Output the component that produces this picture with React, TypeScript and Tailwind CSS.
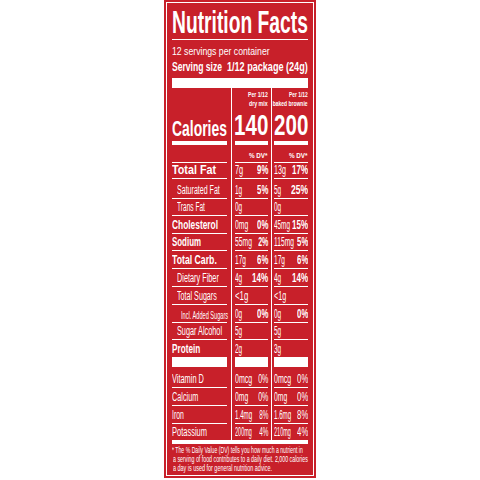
import { useLayoutEffect, useRef, useState, type ReactNode } from "react";

function Fit({
  w,
  right,
  className = "",
  children,
}: {
  w: string;
  right?: boolean;
  className?: string;
  children: ReactNode;
}) {
  const ref = useRef<HTMLSpanElement>(null);
  const [s, setS] = useState<number | null>(null);
  useLayoutEffect(() => {
    const el = ref.current;
    if (!el || !el.parentElement) return;
    const n = el.offsetWidth;
    const t = el.parentElement.clientWidth;
    if (n > 0) setS(t / n);
  }, []);
  return (
    <span className={`inline-flex shrink-0 ${right ? "justify-end" : "justify-start"} ${w}`}>
      <span
        ref={ref}
        className={`shrink-0 whitespace-nowrap ${right ? "origin-right" : "origin-left"} ${className}`}
        style={s === null ? undefined : { transform: `scaleX(${s})` }}
      >
        {children}
      </span>
    </span>
  );
}

function Row({
  h,
  bb,
  align = "items-end pb-[2px]",
  l,
  m,
  r,
}: {
  h: string;
  bb: string;
  align?: string;
  l: ReactNode;
  m: ReactNode;
  r: ReactNode;
}) {
  return (
    <div className={`grid grid-cols-[59px_40px_37px] grid-rows-[100%] overflow-hidden ${h}`}>
      <div className="min-h-0 pr-[4px]">
        <div className={`flex h-full border-white ${bb} ${align}`}>{l}</div>
      </div>
      <div className="min-h-0 border-l border-white pl-[3px] pr-[3px]">
        <div className={`flex h-full justify-between border-white ${bb} ${align}`}>{m}</div>
      </div>
      <div className="min-h-0 border-l border-white pl-[2px]">
        <div className={`flex h-full justify-between border-white ${bb} ${align}`}>{r}</div>
      </div>
    </div>
  );
}

type Cell = [string, string, boolean?];
type Data = {
  h: string;
  bb: string;
  label: Cell;
  indent: string;
  small?: boolean;
  a?: Cell;
  ap?: Cell;
  b?: Cell;
  bp?: Cell;
};

const rows: Data[] = [
  { h: "h-[16px]", bb: "border-b", label: ["Total Fat", "w-[44px]", true], indent: "", a: ["7g", "w-[8px]"], ap: ["9%", "w-[11px]", true], b: ["13g", "w-[12px]"], bp: ["17%", "w-[16px]", true] },
  { h: "h-[20px]", bb: "border-b", label: ["Saturated Fat", "w-[43px]"], indent: "pl-[5px]", a: ["1g", "w-[7px]"], ap: ["5%", "w-[11px]", true], b: ["5g", "w-[7px]"], bp: ["25%", "w-[17px]", true] },
  { h: "h-[17px]", bb: "border-b", label: ["Trans Fat", "w-[28px]"], indent: "pl-[5px]", a: ["0g", "w-[7px]"], b: ["0g", "w-[7px]"] },
  { h: "h-[18px]", bb: "border-b", label: ["Cholesterol", "w-[46px]", true], indent: "", a: ["0mg", "w-[13px]"], ap: ["0%", "w-[11px]", true], b: ["45mg", "w-[16px]"], bp: ["15%", "w-[16px]", true] },
  { h: "h-[17px]", bb: "border-b", label: ["Sodium", "w-[29px]", true], indent: "", a: ["55mg", "w-[17px]"], ap: ["2%", "w-[10px]", true], b: ["115mg", "w-[20px]"], bp: ["5%", "w-[11px]", true] },
  { h: "h-[18px]", bb: "border-b", label: ["Total Carb.", "w-[45px]", true], indent: "", a: ["17g", "w-[11px]"], ap: ["6%", "w-[11px]", true], b: ["17g", "w-[11px]"], bp: ["6%", "w-[11px]", true] },
  { h: "h-[18px]", bb: "border-b", label: ["Dietary Fiber", "w-[42px]"], indent: "pl-[5px]", a: ["4g", "w-[7px]"], ap: ["14%", "w-[16px]", true], b: ["4g", "w-[7px]"], bp: ["14%", "w-[16px]", true] },
  { h: "h-[18px]", bb: "border-b", label: ["Total Sugars", "w-[40px]"], indent: "pl-[5px]", a: ["<1g", "w-[13px]"], b: ["<1g", "w-[12px]"] },
  { h: "h-[18px]", bb: "border-b", label: ["Incl. Added Sugars", "w-[47px]"], indent: "pl-[9px]", small: true, a: ["0g", "w-[7px]"], ap: ["0%", "w-[11px]", true], b: ["0g", "w-[7px]"], bp: ["0%", "w-[11px]", true] },
  { h: "h-[17px]", bb: "border-b", label: ["Sugar Alcohol", "w-[45px]"], indent: "pl-[5px]", a: ["5g", "w-[7px]"], b: ["5g", "w-[7px]"] },
  { h: "h-[27px]", bb: "border-b-[10px]", label: ["Protein", "w-[28px]", true], indent: "", a: ["2g", "w-[7px]"], b: ["3g", "w-[7px]"] },
  { h: "h-[21px]", bb: "border-b", label: ["Vitamin D", "w-[32px]"], indent: "", a: ["0mcg", "w-[17px]"], ap: ["0%", "w-[10px]"], b: ["0mcg", "w-[17px]"], bp: ["0%", "w-[11px]"] },
  { h: "h-[18px]", bb: "border-b", label: ["Calcium", "w-[26px]"], indent: "", a: ["0mg", "w-[13px]"], ap: ["0%", "w-[10px]"], b: ["0mg", "w-[13px]"], bp: ["0%", "w-[11px]"] },
  { h: "h-[18px]", bb: "border-b", label: ["Iron", "w-[12px]"], indent: "", a: ["1.4mg", "w-[17px]"], ap: ["8%", "w-[9px]"], b: ["1.6mg", "w-[17px]"], bp: ["8%", "w-[11px]"] },
  { h: "h-[16px]", bb: "", label: ["Potassium", "w-[35px]"], indent: "", a: ["200mg", "w-[17px]"], ap: ["4%", "w-[9px]"], b: ["210mg", "w-[17px]"], bp: ["4%", "w-[11px]"] },
];

function Txt({ c, right, size = "text-[12px] leading-[12px]" }: { c?: Cell; right?: boolean; size?: string }) {
  if (!c) return <span />;
  return (
    <Fit w={c[1]} right={right} className={`${size} ${c[2] ? "font-bold" : "font-normal"}`}>
      {c[0]}
    </Fit>
  );
}

export default function App() {
  return (
    <div className="flex h-[480px] w-[480px] items-start bg-white pl-[164px] font-['Liberation_Sans',Arial,sans-serif] text-white">
      <div className="h-[478px] w-[152px] bg-[#c8202a] p-[2px]">
        <div className="flex h-full flex-col border border-white px-[5px]">
          <div className="pt-[3px]">
            <div className="flex h-[32px]">
              <Fit w="w-[136px]" className="text-[32px] leading-[32px] font-bold">
                Nutrition Facts
              </Fit>
            </div>
          </div>
          <div className="mt-[1px] h-[1px] shrink-0 bg-white" />
          <div className="mt-[6px] flex h-[11px] shrink-0">
            <Fit w="w-[98px]" className="text-[11px] leading-[11px]">
              12 servings per container
            </Fit>
          </div>
          <div className="mt-[4px] flex h-[12px] shrink-0 justify-between">
            <Fit w="w-[50px]" className="text-[12px] leading-[12px] font-bold">
              Serving size
            </Fit>
            <Fit w="w-[81px]" right className="text-[12px] leading-[12px] font-bold">
              1/12 package (24g)
            </Fit>
          </div>
          <div className="mt-[5px] h-[10px] shrink-0 bg-white" />

          <div className="flex shrink-0 flex-col">
            <Row
              h="h-[57px]"
              bb="border-b-[4px]"
              align=""
              l={
                <div className="flex h-full items-end pb-[1px]">
                  <Fit w="w-[55px]" className="text-[22px] leading-[22px] font-bold">
                    Calories
                  </Fit>
                </div>
              }
              m={
                <div className="flex h-full w-full flex-col items-end justify-between pt-[3px] pb-[1px]">
                  <div className="flex flex-col items-end">
                    <Fit w="w-[20px]" right className="text-[7.5px] leading-[8.5px] font-bold">
                      Per 1/12
                    </Fit>
                    <Fit w="w-[19px]" right className="text-[7.5px] leading-[8.5px] font-bold">
                      dry mix
                    </Fit>
                  </div>
                  <Fit w="w-[34px]" right className="text-[29px] leading-[29px] font-bold">
                    140
                  </Fit>
                </div>
              }
              r={
                <div className="flex h-full w-full flex-col items-end justify-between pt-[3px] pb-[1px]">
                  <div className="flex flex-col items-end">
                    <Fit w="w-[19px]" right className="text-[7.5px] leading-[8.5px] font-bold">
                      Per 1/12
                    </Fit>
                    <Fit w="w-[35px]" right className="text-[7.5px] leading-[8.5px] font-bold">
                      baked brownie
                    </Fit>
                  </div>
                  <Fit w="w-[34px]" right className="text-[29px] leading-[29px] font-bold">
                    200
                  </Fit>
                </div>
              }
            />
            <Row
              h="h-[18px]"
              bb="border-b"
              align="items-end justify-end pb-[2px]"
              l={<span />}
              m={
                <Fit w="w-[19px]" right className="text-[8px] leading-[8px] font-bold">
                  % DV*
                </Fit>
              }
              r={
                <Fit w="w-[19px]" right className="text-[8px] leading-[8px] font-bold">
                  % DV*
                </Fit>
              }
            />
            {rows.map((d) => (
              <Row
                key={d.label[0]}
                h={d.h}
                bb={d.bb}
                l={
                  <div className={`flex ${d.indent}`}>
                    <Txt c={d.label} size={d.small ? "text-[10.5px] leading-[10.5px]" : "text-[12px] leading-[12px]"} />
                  </div>
                }
                m={
                  <>
                    <Txt c={d.a} />
                    <Txt c={d.ap} right />
                  </>
                }
                r={
                  <>
                    <Txt c={d.b} />
                    <Txt c={d.bp} right />
                  </>
                }
              />
            ))}
          </div>
          <div className="h-[4px] shrink-0 bg-white" />
          <div className="mt-[2px] flex flex-col text-[9px] leading-[9px]">
            <div className="flex">
              <Fit w="w-[131px]">* The % Daily Value (DV) tells you how much a nutrient in</Fit>
            </div>
            <div className="flex pl-[1px]">
              <Fit w="w-[135px]">a serving of food contributes to a daily diet. 2,000 calories</Fit>
            </div>
            <div className="flex pl-[1px]">
              <Fit w="w-[99px]">a day is used for general nutrition advice.</Fit>
            </div>
          </div>
        </div>
      </div>
    </div>
  );
}
